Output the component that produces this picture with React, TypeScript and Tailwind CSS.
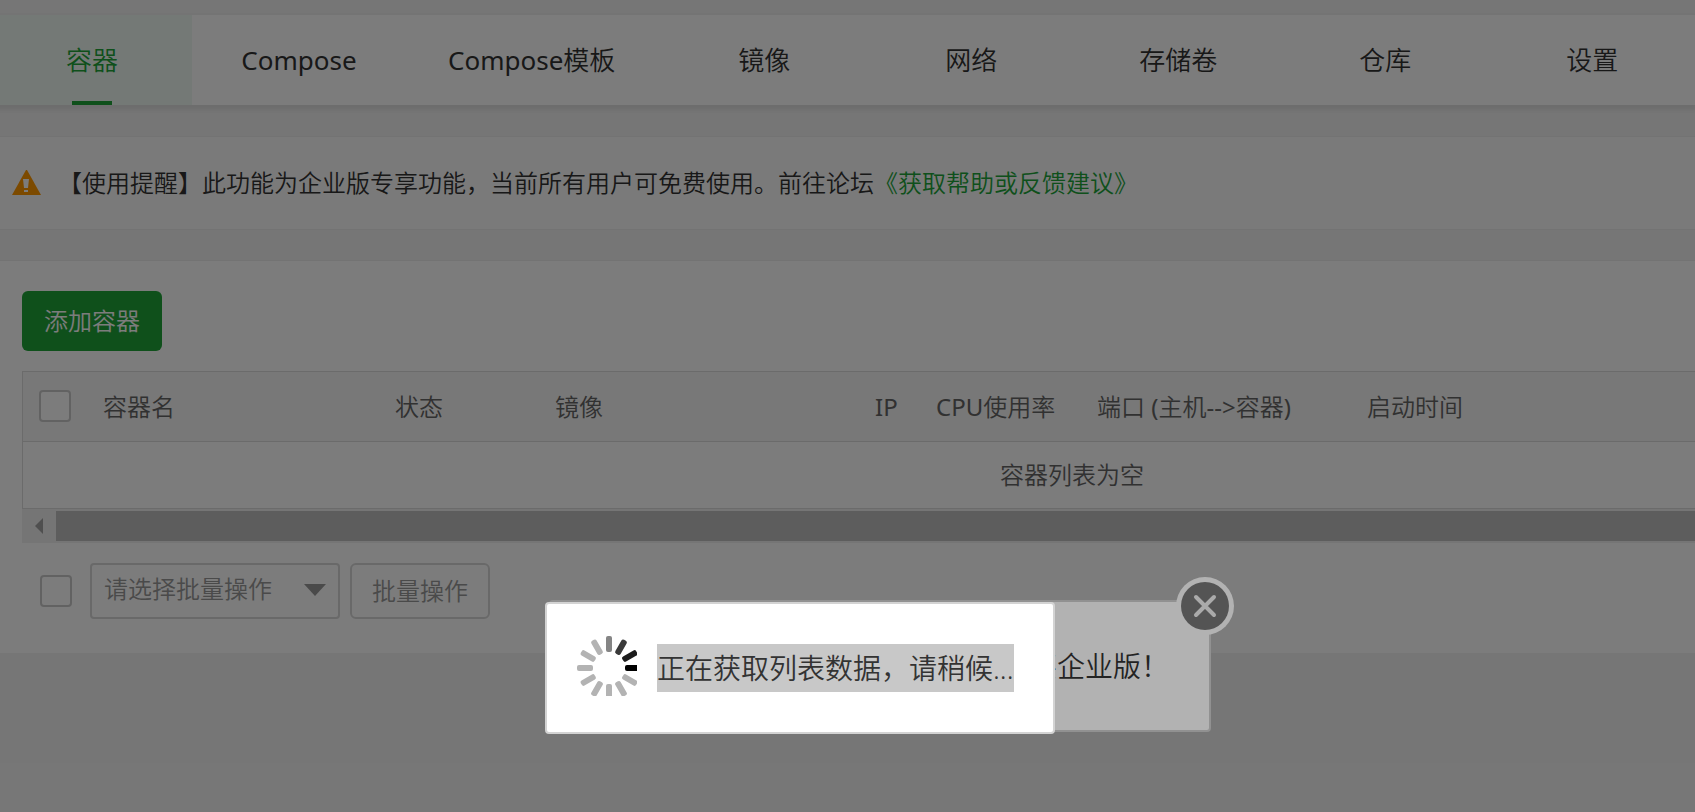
import { useState } from "react";
import clsx from "clsx";

const TABS = ["容器", "Compose", "Compose模板", "镜像", "网络", "存储卷", "仓库", "设置"];

const COLUMNS = [
  { label: "容器名", width: "w-[292px]" },
  { label: "状态", width: "w-[160px]" },
  { label: "镜像", width: "w-[320px]" },
  { label: "IP", width: "w-[61px]" },
  { label: "CPU使用率", width: "w-[161px]" },
  { label: "端口 (主机-->容器)", width: "w-[270px]" },
  { label: "启动时间", width: "w-[770px]" },
];

const CHECKBOX = "block size-8 shrink-0 appearance-none rounded border-2 border-[#cbcbcb] bg-white checked:bg-[#20a53a]";

export default function App() {
  const [tab, setTab] = useState("容器");

  return (
    <div className="relative min-h-screen overflow-hidden bg-[#f3f3f3] pt-[15px] font-['Noto_Sans','Noto_Sans_CJK_SC',sans-serif] text-[24px] leading-8 font-[350] text-[#333]">
      <nav className="-ml-2 flex h-[90px] gap-[7px] bg-white shadow-[0_3px_5px_2px_rgba(0,0,0,0.08)]">
        {TABS.map((t) => (
          <button
            key={t}
            type="button"
            onClick={() => setTab(t)}
            className={clsx(
              "relative min-w-[200px] shrink-0 px-[42px] text-[26px] whitespace-nowrap",
              t === tab && "bg-[#f0f9f2] text-[#20a53a]",
            )}
          >
            <Label text={t} />
            {t === tab && <span className="absolute bottom-0 left-1/2 h-1 w-10 -translate-x-1/2 bg-[#20a53a]" />}
          </button>
        ))}
      </nav>

      <div className="mt-[31px] flex h-[94px] items-center border-y border-[#ececec] bg-[#fbfbfb] pl-3">
        <WarningIcon />
        <p className="ml-4 whitespace-nowrap">
          【使用提醒】此功能为企业版专享功能，当前所有用户可免费使用。前往论坛
          <a href="#forum" className="text-[#20a53a]">《获取帮助或反馈建议》</a>
        </p>
      </div>

      <main className="mt-[30px] border-t border-[#ececec] bg-white pt-[30px] pb-[34px] pl-[22px]">
        <button type="button" className="h-[60px] rounded-md bg-[#20a53a] px-[22px] text-white">添加容器</button>

        <ContainerTable />
        <ScrollBar />

        <div className="mt-5 flex items-center">
          <input type="checkbox" aria-label="全选" className={clsx(CHECKBOX, "ml-[18px]")} />
          <div className="relative ml-[18px]">
            <select
              aria-label="批量操作"
              className="block h-14 w-[250px] appearance-none rounded border-2 border-[#d9d9d9] bg-white pr-10 pb-1 pl-3 text-[#999]"
            >
              <option>请选择批量操作</option>
            </select>
            <svg viewBox="0 0 22 12" className="pointer-events-none absolute top-[21px] right-[14px] h-3 w-[22px] fill-[#999]">
              <path d="M0 0h22L11 12z" />
            </svg>
          </div>
          <button type="button" className="ml-[10px] h-14 w-[140px] rounded-md border-2 border-[#d9d9d9] text-[#999]">
            批量操作
          </button>
        </div>
      </main>

      <div className="absolute inset-0 bg-black/30" />
      <UpgradeMessage />
      <div className="absolute inset-0 bg-black/30" />
      <LoadingMessage />
    </div>
  );
}

// Latin runs look too thin next to the Chinese at the same weight
function Label({ text }: { text: string }) {
  return (
    <>
      {text.split(/([A-Za-z()>-]+)/).map((part, i) =>
        i % 2 === 1 ? <span key={i} className="font-normal">{part}</span> : part,
      )}
    </>
  );
}

function ContainerTable() {
  return (
    <div className="mt-5 overflow-hidden border-y border-l border-[#ddd]">
      <table className="w-[2098px] table-fixed border-collapse text-[#666]">
        <thead>
          <tr className="h-[69px] border-b border-[#ddd] bg-[#f6f6f6]">
            <th className="w-16 pl-4">
              <input type="checkbox" aria-label="选择所有容器" className={CHECKBOX} />
            </th>
            {COLUMNS.map((c) => (
              <th key={c.label} className={clsx("pt-[2px] pl-4 text-left font-[350] whitespace-nowrap", c.width)}>
                <Label text={c.label} />
              </th>
            ))}
          </tr>
        </thead>
        <tbody>
          <tr className="h-[67px]">
            <td colSpan={COLUMNS.length + 1} className="text-center">容器列表为空</td>
          </tr>
        </tbody>
      </table>
    </div>
  );
}

function ScrollBar() {
  return (
    <div className="flex h-[34px] items-center bg-[#f1f1f1]">
      <svg viewBox="0 0 34 34" className="size-[34px] shrink-0 fill-[#a3a3a3]">
        <path d="M21 9v16l-8-8z" />
      </svg>
      <div className="h-[30px] flex-1 bg-[#c1c1c1]" />
    </div>
  );
}

function UpgradeMessage() {
  return (
    <div className="absolute top-[600px] left-[549px] flex h-[132px] w-[662px] items-center justify-end rounded border-2 border-[#d0d0d0] bg-white pr-10">
      <p className="text-[28px] whitespace-nowrap">买企业版！</p>
      <button type="button" aria-label="关闭" className="absolute -top-[26px] -right-[26px] size-[60px]">
        <svg viewBox="0 0 60 60" fill="none">
          <circle cx="30" cy="30" r="29" fill="#fff" />
          <circle cx="30" cy="30" r="24" fill="#797979" />
          <path d="M21 21l18 18M39 21L21 39" stroke="#f4f4f4" strokeWidth="4" strokeLinecap="round" />
        </svg>
      </button>
    </div>
  );
}

function LoadingMessage() {
  return (
    <div className="absolute top-[602px] left-[545px] flex h-[132px] w-[510px] items-center rounded border-2 border-[#d3d3d3] bg-white pl-[30px]">
      <Spinner />
      <p className="ml-5 bg-[#c8c8c8] text-[28px] leading-[48px] whitespace-nowrap">正在获取列表数据，请稍候...</p>
    </div>
  );
}

// twelve spokes, starting at 12 o'clock and going clockwise
const SPOKES = ["#858585", "#3a3a3a", "#1c1c1c", "#000", "#b3b3b3", "#b3b3b3", "#b3b3b3", "#b3b3b3", "#b3b3b3", "#b3b3b3", "#b3b3b3", "#b3b3b3"];

function Spinner() {
  return (
    <svg viewBox="0 0 60 60" className="mb-1 size-[60px] shrink-0">
      {SPOKES.map((color, i) => (
        <rect key={i} x="29" width="6" height="16" rx="2" fill={color} transform={`rotate(${i * 30} 32 32)`} />
      ))}
    </svg>
  );
}

function WarningIcon() {
  return (
    <svg viewBox="0 0 30 26" className="h-[26px] w-[30px] shrink-0">
      <path d="M14 0h1l14 25H0z" fill="#ff9900" />
      <path d="M11 9h6l-1 9h-4zM12 20h4v2h-4z" fill="#fff" />
    </svg>
  );
}
